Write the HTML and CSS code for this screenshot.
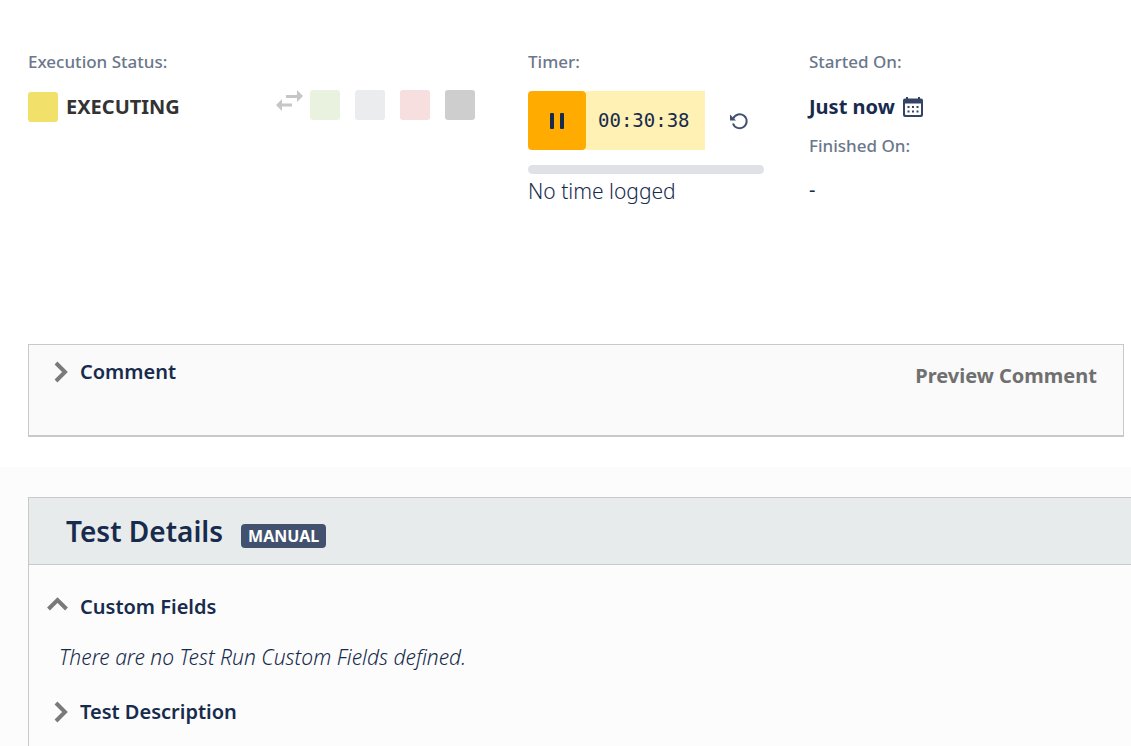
FILE: index.html
```html
<!DOCTYPE html>
<html lang="en">
<head>
    <meta charset="UTF-8">
    <meta name="viewport" content="width=device-width, initial-scale=1.0">
    <title>Test Execution</title>
    <link rel="stylesheet" href="styles.css">
</head>
<body>
    <!-- Execution summary -->
    <section class="summary">
        <div class="summary-col">
            <h2 class="label">Execution Status:</h2>
            <div class="status-row">
                <div class="status-current">
                    <span class="swatch executing"></span>
                    <span class="status-name">EXECUTING</span>
                </div>
                <div class="status-options">
                    <svg class="swap-icon" width="28" height="24" viewBox="0 0 28 24" aria-hidden="true">
                        <path d="M11 5h11V0l6 6-6 6V8H11zM17 13.500H7V9L1 15l6 6v-4.500h10z" fill="#c6c6c6"/>
                    </svg>
                    <button class="swatch pass" aria-label="Pass"></button>
                    <button class="swatch todo" aria-label="To do"></button>
                    <button class="swatch fail" aria-label="Fail"></button>
                    <button class="swatch aborted" aria-label="Aborted"></button>
                </div>
            </div>
        </div>

        <div class="summary-col">
            <h2 class="label">Timer:</h2>
            <div class="timer">
                <button class="timer-pause" aria-label="Pause">
                    <svg width="16" height="16" viewBox="0 0 16 16" fill="#172b4d">
                        <rect x="1" y="0" width="4" height="16" rx="1"/>
                        <rect x="11" y="0" width="4" height="16" rx="1"/>
                    </svg>
                </button>
                <span class="timer-value">00:30:38</span>
                <button class="timer-reset" aria-label="Reset">
                    <svg width="20" height="20" viewBox="0 0 20 20">
                        <path d="M4.200 7.500A7 7 0 1 1 4 12.500" fill="none" stroke="#42526e" stroke-width="2"/>
                        <path d="M1 3.500V9.500H7z" fill="#42526e"/>
                    </svg>
                </button>
            </div>
            <div class="progress"></div>
            <p class="time-logged">No time logged</p>
        </div>

        <div class="summary-col">
            <h2 class="label">Started On:</h2>
            <div class="started">
                <strong>Just now</strong>
                <svg width="22" height="22" viewBox="0 0 22 22" aria-hidden="true">
                    <path d="M3 2.500h1V1h2v1.500h10V1h2v1.500h1a2 2 0 0 1 2 2V19a2 2 0 0 1-2 2H3a2 2 0 0 1-2-2V4.500a2 2 0 0 1 2-2zM3 7.500V18a1 1 0 0 0 1 1h14a1 1 0 0 0 1-1V7.500z" fill="#344563" fill-rule="evenodd"/>
                    <path d="M5.500 10h2v2h-2zm4.500 0h2v2h-2zm4.500 0h2v2h-2zM5.500 14.500h2v2h-2zm4.500 0h2v2h-2zm4.500 0h2v2h-2z" fill="#344563"/>
                </svg>
            </div>
            <h2 class="label">Finished On:</h2>
            <p class="finished">-</p>
        </div>
    </section>

    <!-- Comment -->
    <section class="comment">
        <button class="toggle">
            <svg class="chevron" width="22" height="22" viewBox="0 0 22 22"><path d="M9 2l9 9-9 9"/></svg>
            Comment
        </button>
        <button class="preview">Preview Comment</button>
    </section>

    <!-- Test details -->
    <main class="details-area">
        <section class="details">
            <header class="details-header">
                <h1>Test Details</h1>
                <span class="badge">MANUAL</span>
            </header>
            <div class="details-body">
                <button class="toggle">
                    <svg class="chevron" width="22" height="22" viewBox="0 0 22 22"><path d="M1.500 13l9-9 9 9"/></svg>
                    Custom Fields
                </button>
                <p class="empty">There are no Test Run Custom Fields defined.</p>
                <button class="toggle">
                    <svg class="chevron" width="22" height="22" viewBox="0 0 22 22"><path d="M9 2l9 9-9 9"/></svg>
                    Test Description
                </button>
            </div>
        </section>
    </main>
</body>
</html>
```
FILE: styles.css
```css
/* General Styles */
* {
    box-sizing: border-box;
}

body {
    margin: 0;
    background-color: #fff;
    color: #172b4d;
    font-family: "Segoe UI", "Noto Sans", sans-serif;
    font-size: 20px;
    line-height: 30px;
}

h1,
h2,
p {
    margin: 0;
}

button {
    border: none;
    padding: 0;
    background: none;
    color: inherit;
    font: inherit;
    cursor: pointer;
}

svg {
    display: block;
    flex: none;
}

/* Execution summary */
.summary {
    display: grid;
    grid-template-columns: 500fr 281fr 315fr;
    min-height: 344px;
    padding: 50px 7px 0 28px;
}

.label {
    color: #6b778c;
    font-size: 17px;
    font-weight: 500;
    line-height: 24px;
}

.status-row {
    display: flex;
    justify-content: space-between;
    padding: 16px 53px 0 0;
}

.status-current {
    display: flex;
    gap: 8px;
    padding-top: 2px;
}

.status-name {
    color: #333;
    font-weight: 700;
}

.status-options {
    display: flex;
    gap: 15px;
}

.swap-icon {
    margin-right: -8px;
}

.swatch {
    width: 30px;
    height: 30px;
    border-radius: 3px;
}

.executing {
    background-color: #f1e069;
}

.pass {
    background-color: #e9f2df;
}

.todo {
    background-color: #ebecee;
}

.fail {
    background-color: #f6dfde;
}

.aborted {
    background-color: #cecece;
}

/* Timer */
.timer {
    display: flex;
    height: 59px;
    margin: 17px 0 15px;
}

.timer-pause {
    display: flex;
    justify-content: center;
    align-items: center;
    width: 58px;
    border-radius: 4px;
    background-color: #ffab00;
}

.timer-value {
    padding: 0 15px 0 12px;
    background-color: #fff0b3;
    font-family: Consolas, "DejaVu Sans Mono", monospace;
    font-size: 19px;
    line-height: 59px;
}

.timer-reset {
    margin-left: 24px;
}

.progress {
    width: 236px;
    height: 9px;
    border-radius: 5px;
    background-color: #dfe1e6;
}

.time-logged {
    padding-top: 2px;
    font-size: 21px;
    font-weight: 300;
}

/* Dates */
.started {
    display: flex;
    align-items: center;
    gap: 7px;
    padding: 18px 0 12px;
}

strong {
    font-weight: 700;
}

.finished {
    padding-top: 17px;
}

/* Collapsible titles */
.toggle {
    display: flex;
    align-items: center;
    gap: 11px;
    font-weight: 600;
}

.chevron {
    fill: none;
    stroke: #7a7a7a;
    stroke-width: 4;
}

/* Comment */
.comment {
    display: flex;
    justify-content: space-between;
    align-items: flex-start;
    min-height: 93px;
    margin: 0 7px 30px 28px;
    padding: 12px 26px 0 18px;
    border: 1px solid #c9c9c9;
    border-bottom-width: 2px;
    background-color: #fafafa;
}

.preview {
    padding-top: 4px;
    color: #707070;
    font-weight: 700;
}

/* Test details */
.details-area {
    padding: 30px 0 0 28px;
    background-color: #fcfcfc;
}

.details {
    border: 1px solid #c9c9c9;
    border-width: 1px 0 0 1px;
}

.details-header {
    display: flex;
    align-items: center;
    gap: 18px;
    height: 67px;
    padding-left: 37px;
    border-bottom: 1px solid #c9c9c9;
    background-color: #e7ebeb;
}

h1 {
    font-size: 28px;
    font-weight: 600;
}

.badge {
    margin-top: 9px;
    padding: 0 7px;
    border-radius: 4px;
    background-color: #42526e;
    color: #fff;
    font-size: 16px;
    font-weight: 700;
    line-height: 24px;
}

.details-body {
    padding: 27px 18px 19px;
}

.empty {
    padding: 20px 0 25px 12px;
    font-size: 21px;
    font-style: italic;
    font-weight: 300;
}
```
